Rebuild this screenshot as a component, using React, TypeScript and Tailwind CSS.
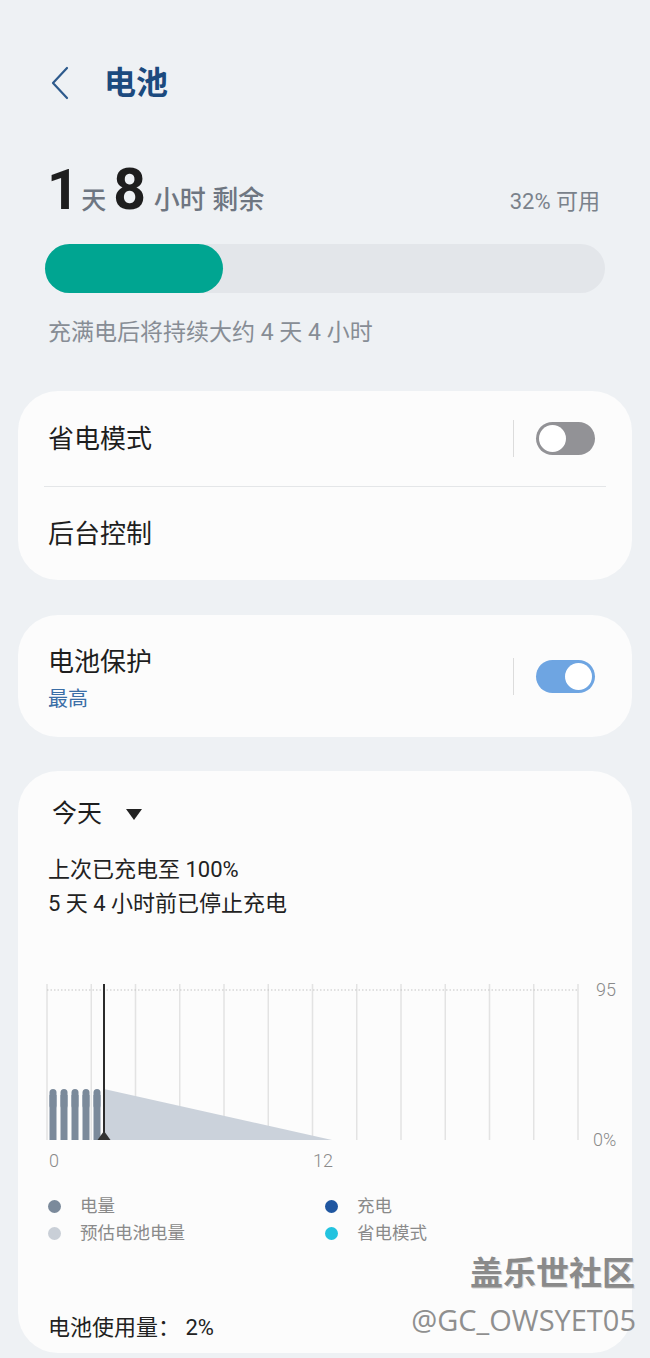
import React from "react";

const LEGEND = [
  { color: "bg-[#7b8a9b]", label: "电量" },
  { color: "bg-[#1f56a0]", label: "充电" },
  { color: "bg-[#c9cfd7]", label: "预估电池电量" },
  { color: "bg-[#22c3df]", label: "省电模式" },
];

function Toggle({ on }: { on: boolean }) {
  return (
    <div
      className={
        on
          ? "flex h-[33px] w-[59px] items-center justify-end rounded-full bg-[#6ea5e2] px-[3px]"
          : "flex h-[33px] w-[59px] items-center justify-start rounded-full bg-[#929296] px-[3px]"
      }
    >
      <div className="h-[27px] w-[27px] rounded-full bg-white" />
    </div>
  );
}

function Chart() {
  // grid 13 lines, 44.25px apart, drawn in card-local coords
  const lines = Array.from({ length: 13 }, (_, i) => 29 + i * 44.25);
  const bars = [31.5, 42.5, 53.5, 64.5, 75.5];
  return (
    <div className="relative mt-[56px] h-[195px]">
      <svg width="614" height="195" className="absolute left-0 top-0">
        {lines.map((x) => (
          <line key={x} x1={x} x2={x} y1={7} y2={163} stroke="#e3e3e3" strokeWidth="1.5" />
        ))}
        <line x1={29} x2={560} y1={13} y2={13} stroke="#c4c4c4" strokeWidth="1.2" strokeDasharray="1.5 2" />
        <polygon points="86,112 314,163 86,163" fill="#cbd2db" />
        {bars.map((x) => (
          <g key={x} fill="#7b8a9b">
            <rect x={x} y={112} width={7} height={20} rx={3.5} />
            <rect x={x} y={118} width={7} height={45} />
          </g>
        ))}
        <line x1={86} x2={86} y1={7} y2={163} stroke="#2b2b2b" strokeWidth="2" />
        <polygon points="79.5,163 92.5,163 86,154" fill="#333333" />
      </svg>
      <span className="absolute left-[578px] top-[2px] text-[18px] font-light leading-[22px] text-[#8a8a8a]">95</span>
      <span className="absolute left-[575px] top-[152px] text-[18px] font-light leading-[22px] text-[#8a8a8a]">0%</span>
      <span className="absolute left-[31px] top-[173px] text-[18px] font-light leading-[22px] text-[#8a8a8a]">0</span>
      <span className="absolute left-[295px] top-[173px] text-[18px] font-light leading-[22px] text-[#8a8a8a]">12</span>
    </div>
  );
}

export default function App() {
  return (
    <div className="relative flex h-[1358px] w-[650px] flex-col overflow-hidden bg-[#eef1f4] font-['Roboto','Noto_Sans_CJK_SC',sans-serif] text-[#1e1e1e]">
      {/* Header */}
      <header className="mt-[58px] flex h-[50px] items-center pl-[50px]">
        <svg width="19" height="34" viewBox="0 0 19 34" fill="none">
          <path d="M17 2 L3 17 L17 32" stroke="#2d5a8c" strokeWidth="2.2" strokeLinecap="round" strokeLinejoin="round" />
        </svg>
        <h1 className="ml-[35px] text-[32px] font-bold leading-none text-[#1c4a7e]">电池</h1>
      </header>

      {/* Remaining time */}
      <div className="mt-[53px] flex items-baseline justify-between pl-[47px] pr-[50px] leading-none">
        <div className="flex items-baseline">
          <span className="text-[56px] font-bold text-[#1e1e1e]">1</span>
          <span className="ml-[2px] text-[25px] font-medium text-[#6e7681]">天</span>
          <span className="ml-[7px] text-[57px] font-bold text-[#1e1e1e]">8</span>
          <span className="ml-[8px] text-[26px] font-medium text-[#6e7681]">小时 剩余</span>
        </div>
        <span className="text-[22px] text-[#7a828b]">32% 可用</span>
      </div>

      <div className="mx-[45px] mt-[26px] h-[49px] rounded-full bg-[#e3e6ea]">
        <div className="h-full w-[178px] rounded-full bg-[#00a591]" />
      </div>

      <p className="mt-[25px] pl-[48px] text-[23px] leading-[30px] text-[#878d95]">充满电后将持续大约 4 天 4 小时</p>

      {/* Card 1 */}
      <section className="mx-[18px] mt-[43px] rounded-[40px] bg-[#fcfcfc]">
        <div className="flex h-[95px] items-center pl-[30px] pr-[37px]">
          <span className="flex-1 text-[26px] leading-[32px]">省电模式</span>
          <div className="h-[37px] w-px bg-[#dcdcdc]" />
          <div className="ml-[22px]">
            <Toggle on={false} />
          </div>
        </div>
        <div className="mx-[26px] h-px bg-[#e4e6e8]" />
        <div className="flex h-[93px] items-center pl-[30px]">
          <span className="text-[26px] leading-[32px]">后台控制</span>
        </div>
      </section>

      {/* Card 2 */}
      <section className="mx-[18px] mt-[35px] flex h-[122px] rounded-[40px] bg-[#fcfcfc] pl-[30px] pr-[37px]">
        <div className="flex-1 pt-[31px]">
          <p className="text-[26px] leading-[32px]">电池保护</p>
          <p className="mt-[8px] text-[20px] leading-[26px] text-[#3b6ea6]">最高</p>
        </div>
        <div className="flex items-center">
          <div className="h-[37px] w-px bg-[#dcdcdc]" />
          <div className="ml-[22px]">
            <Toggle on />
          </div>
        </div>
      </section>

      {/* Card 3 */}
      <section className="mx-[18px] mt-[34px] rounded-[40px] bg-[#fcfcfc] pb-[10px]">
        <div className="flex items-center pl-[34px] pt-[27px]">
          <span className="text-[25px] leading-[32px]">今天</span>
          <svg width="16" height="11" viewBox="0 0 16 11" className="ml-[24px]">
            <polygon points="0,0 16,0 8,11" fill="#222222" />
          </svg>
        </div>
        <div className="mt-[23px] pl-[30px] text-[22px] leading-[34px] text-[#222222]">
          <p>上次已充电至 100%</p>
          <p>5 天 4 小时前已停止充电</p>
        </div>

        <Chart />

        <div className="mt-[21px] grid grid-cols-[277px_1fr] pl-[30px]">
          {LEGEND.map((item) => (
            <div key={item.label} className="flex h-[27px] items-center">
              <span className={`h-[13px] w-[13px] rounded-full ${item.color}`} />
              <span className="ml-[19px] text-[17.5px] text-[#8a8a8a]">{item.label}</span>
            </div>
          ))}
        </div>

        <p className="mt-[66px] pl-[30px] text-[22px] leading-[30px] text-[#222222]">电池使用量： 2%</p>
      </section>

      {/* Watermark */}
      <div className="absolute left-[470px] top-[1256px] text-[33px] font-bold leading-[36px] text-[#8a8a8a] [text-shadow:1px_1px_0_#d8d8d8]">
        盖乐世社区
      </div>
      <div className="absolute right-[14px] top-[1302px] font-['Open_Sans',sans-serif] text-[29px] leading-[36px] text-[#8f8f8f]">
        @GC_OWSYET05
      </div>
    </div>
  );
}
